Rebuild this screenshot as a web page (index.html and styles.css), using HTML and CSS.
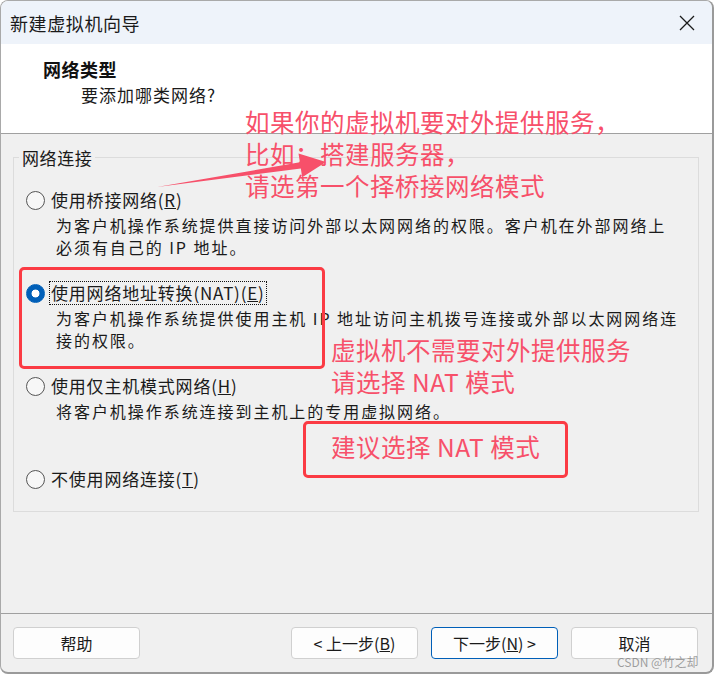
FILE: index.html
```html
<!DOCTYPE html>
<html lang="zh-CN">
<head>
<meta charset="utf-8">
<title>新建虚拟机向导</title>
<link rel="stylesheet" href="styles.css">
</head>
<body>
<div class="window">
  <div class="titlebar">
    <span class="title">新建虚拟机向导</span>
    <span class="close"><svg width="16" height="16" viewBox="0 0 16 16"><path d="M1 1 L15 15 M15 1 L1 15" stroke="#1b1b1b" stroke-width="1.3" fill="none"/></svg></span>
  </div>
  <div class="header">
    <div class="h-title">网络类型</div>
    <div class="h-sub">要添加哪类网络?</div>
  </div>
  <div class="content">
    <div class="group">
      <div class="legend">网络连接</div>
      <div class="options">
        <div class="option">
          <div class="opt-label"><span class="radio"></span><span class="label-text">使用桥接网络(<u>R</u>)</span></div>
          <div class="desc">为客户机操作系统提供直接访问外部以太网网络的权限。客户机在外部网络上<br>必须有自己的 IP 地址。</div>
        </div>
        <div class="option">
          <div class="opt-label"><span class="radio checked"></span><span class="label-text focused">使用网络地址转换(NAT)(<u>E</u>)</span></div>
          <div class="desc">为客户机操作系统提供使用主机 IP 地址访问主机拨号连接或外部以太网网络连<br>接的权限。</div>
        </div>
        <div class="option">
          <div class="opt-label"><span class="radio"></span><span class="label-text">使用仅主机模式网络(<u>H</u>)</span></div>
          <div class="desc">将客户机操作系统连接到主机上的专用虚拟网络。</div>
        </div>
        <div class="option last">
          <div class="opt-label"><span class="radio"></span><span class="label-text">不使用网络连接(<u>T</u>)</span></div>
        </div>
      </div>
    </div>
  </div>
  <div class="footer">
    <button class="btn">帮助</button>
    <div class="spacer"></div>
    <button class="btn">&lt; 上一步(<u>B</u>)</button>
    <button class="btn primary">下一步(<u>N</u>) &gt;</button>
    <button class="btn">取消</button>
  </div>

  <svg class="arrow" width="714" height="674" viewBox="0 0 714 674">
    <polygon points="157,187 299.9,162.3 298.5,153.5 326,162 302.2,177.2 300.8,168.4" fill="#f7506a"/>
  </svg>
  <div class="note note1">如果你的虚拟机要对外提供服务，<br>比如：搭建服务器，<br>请选第一个择桥接网络模式</div>
  <div class="mark mark1"></div>
  <div class="note note2">虚拟机不需要对外提供服务<br>请选择 NAT 模式</div>
  <div class="mark mark2"></div>
  <div class="note note3">建议选择 NAT 模式</div>
  <div class="watermark">CSDN @竹之却</div>
</div>
</body>
</html>
```

FILE: styles.css
```css
* { box-sizing: border-box; }
html, body { margin: 0; padding: 0; background: #ffffff; }
body {
  width: 714px;
  height: 674px;
  overflow: hidden;
  font-family: "Noto Sans CJK SC", "Noto Sans", sans-serif;
  color: #1a1a1a;
}
.window {
  position: relative;
  width: 714px;
  height: 674px;
  border: 1px solid #a9a9a9;
  border-right: 2px solid #9a9a9a;
  border-bottom: 2px solid #9a9a9a;
  border-radius: 8px;
  overflow: hidden;
  display: flex;
  flex-direction: column;
  background: #f0f0f0;
}
.titlebar {
  height: 43px;
  flex: none;
  background: #eef3fa;
  display: flex;
  align-items: center;
  justify-content: space-between;
  padding: 0 17px 0 9px;
}
.title { font-size: 18px; letter-spacing: 0.6px; line-height: 22px; }
.close { display: flex; }
.header {
  height: 90px;
  flex: none;
  background: #ffffff;
  border-bottom: 1px solid #a0a0a0;
  padding: 14px 0 0 42px;
}
.h-title { font-size: 18px; font-weight: 700; line-height: 22px; letter-spacing: 0.5px; color: #111; }
.h-sub { font-size: 17px; line-height: 22px; margin: 4px 0 0 38px; letter-spacing: 1px; }
.content {
  flex: 1;
  padding: 23px 13px 0 12px;
}
.group {
  border: 1px solid #dcdcdc;
  height: 355px;
  padding: 0 12px;
}
.legend {
  width: fit-content;
  margin: -11px 0 0 -7px;
  padding: 0 3px;
  background: #f0f0f0;
  font-size: 17px;
  line-height: 22px;
  letter-spacing: 0.6px;
}
.options { padding-top: 19px; }
.option { height: 93px; }
.option.last { height: auto; }
.opt-label { display: flex; align-items: center; height: 24px; }
.radio {
  width: 19px;
  height: 19px;
  flex: none;
  border-radius: 50%;
  border: 1px solid #555;
  background: #f7f7f7;
}
.radio.checked {
  border-color: #005fb8;
  background: radial-gradient(circle, #ffffff 0 3.6px, #005fb8 4.3px);
}
.label-text {
  display: inline-block;
  margin-left: 5px;
  padding: 0 1px;
  font-size: 17px;
  line-height: 22px;
  letter-spacing: 0.8px;
}
.label-text.focused { outline: 1px dotted #111; }
.desc {
  margin: 2px 0 0 30px;
  font-size: 16px;
  line-height: 22px;
  letter-spacing: 1.95px;
  white-space: nowrap;
}
.footer {
  height: 59px;
  flex: none;
  border-top: 1px solid #a0a0a0;
  display: flex;
  align-items: flex-start;
  gap: 13px;
  padding: 13px 14px 0 12px;
}
.spacer { flex: 1; }
.btn {
  width: 127px;
  height: 32px;
  border: 1px solid #d0d0d0;
  border-radius: 4px;
  background: #fdfdfd;
  font-family: inherit;
  font-size: 16px;
  color: #1a1a1a;
  padding: 0;
}
.btn.primary { border-color: #005fb8; }
.arrow { position: absolute; left: -1px; top: -1px; pointer-events: none; }
.note {
  position: absolute;
  font-size: 24.5px;
  line-height: 32px;
  letter-spacing: 0.5px;
  color: #f7506a;
  white-space: nowrap;
}
.note1 { left: 244px; top: 105px; }
.note2 { left: 330px; top: 333px; }
.note3 { left: 330px; top: 430px; }
.mark {
  position: absolute;
  border: 3px solid #fb3b44;
  border-radius: 5px;
}
.mark1 { left: 18px; top: 266px; width: 306px; height: 102px; }
.mark2 { left: 302px; top: 420px; width: 265px; height: 57px; }
.watermark {
  position: absolute;
  left: 616px;
  top: 653px;
  font-size: 12px;
  line-height: 16px;
  color: rgba(130, 130, 130, 0.75);
  white-space: nowrap;
}
```
